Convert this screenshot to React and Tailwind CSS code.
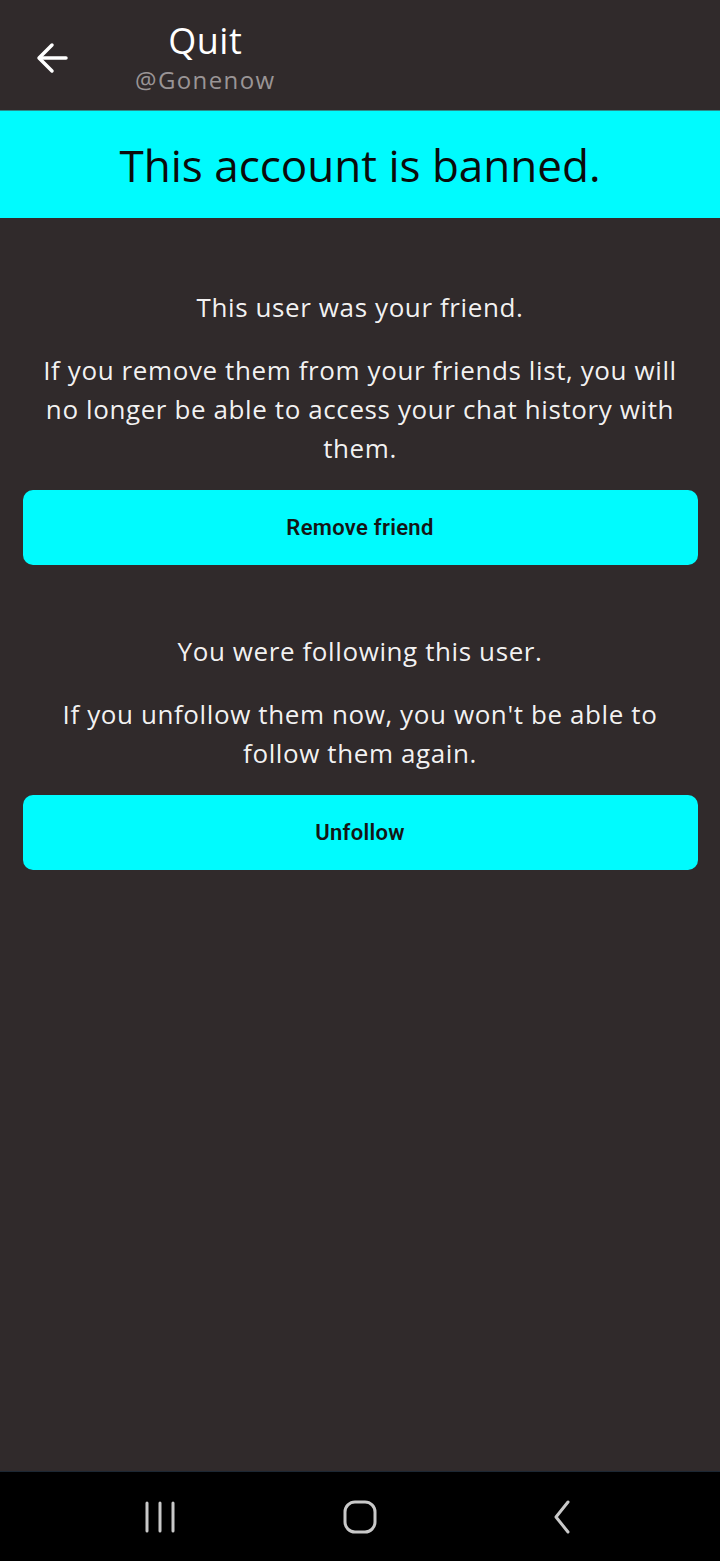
import React from "react";

function NavBar() {
  return (
    <div className="h-[90px] bg-black border-t border-[#1c2733] flex items-center justify-center gap-[164px]">
      <svg width="36" height="36" viewBox="0 0 36 36">
        <g stroke="#c9c9c9" strokeWidth="3" strokeLinecap="round">
          <line x1="5" y1="4" x2="5" y2="32" />
          <line x1="18" y1="4" x2="18" y2="32" />
          <line x1="31" y1="4" x2="31" y2="32" />
        </g>
      </svg>
      <svg width="36" height="36" viewBox="0 0 36 36">
        <rect x="3" y="3" width="30" height="30" rx="10" fill="none" stroke="#c9c9c9" strokeWidth="3" />
      </svg>
      <svg width="36" height="36" viewBox="0 0 36 36">
        <polyline points="26,3 14,18 26,33" fill="none" stroke="#c9c9c9" strokeWidth="3" strokeLinecap="round" strokeLinejoin="round" />
      </svg>
    </div>
  );
}

function Section({ title, body, action }) {
  return (
    <div className="flex flex-col items-center">
      <p className="text-[26px] leading-[39px] tracking-[0.6px] text-white/95 text-center">{title}</p>
      <p className="mt-[24px] px-[10px] text-[26px] leading-[39px] tracking-[0.6px] text-white/95 text-center">{body}</p>
      <button className="mt-[22px] w-[675px] h-[75px] rounded-[10px] bg-[#00fbfe] text-[#151515] text-[22px] tracking-[0.3px] font-semibold font-['Roboto',sans-serif]">
        {action}
      </button>
    </div>
  );
}

export default function App() {
  return (
    <div className="w-[720px] h-[1561px] bg-[#302a2b] flex flex-col font-['Open_Sans',sans-serif]">
      <div className="h-[110px] flex items-center">
        <button className="ml-[36px] mt-[6px]">
          <svg width="34" height="34" viewBox="0 0 34 34">
            <g fill="none" stroke="white" strokeWidth="3.5" strokeLinecap="round" strokeLinejoin="round">
              <line x1="4" y1="17" x2="30" y2="17" />
              <polyline points="16,4 3,17 16,30" />
            </g>
          </svg>
        </button>
        <div className="ml-[65px] flex flex-col items-center mt-[4px]">
          <span className="text-[36px] leading-[44px] tracking-[0.5px] text-white">Quit</span>
          <span className="mt-[1px] text-[24px] leading-[32px] tracking-[1.4px] text-[#9a9596]">@Gonenow</span>
        </div>
      </div>
      <div className="h-[108px] bg-[#00fbfe] border-t border-[#2a8c8d] flex items-center justify-center">
        <span className="text-[44px] text-[#0b0b0b]">This account is banned.</span>
      </div>
      <div className="flex-1 flex flex-col px-[22px] pt-[70px] gap-[67px]">
        <Section
          title="This user was your friend."
          body="If you remove them from your friends list, you will no longer be able to access your chat history with them."
          action="Remove friend"
        />
        <Section
          title="You were following this user."
          body="If you unfollow them now, you won't be able to follow them again."
          action="Unfollow"
        />
      </div>
      <NavBar />
    </div>
  );
}
